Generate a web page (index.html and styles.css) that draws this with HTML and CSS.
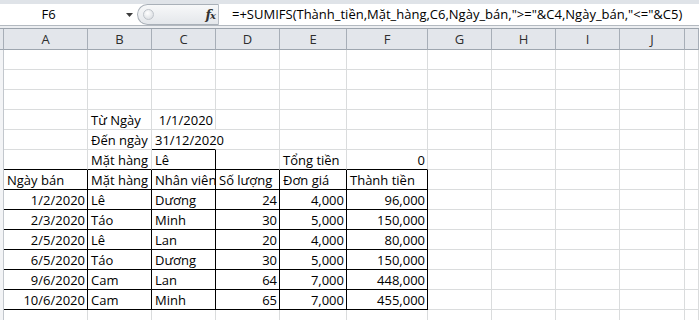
FILE: index.html
```html
<!DOCTYPE html>
<html lang="vi">
<head>
    <meta charset="UTF-8">
    <title>Bán hàng - SUMIFS</title>
    <link rel="stylesheet" href="styles.css">
</head>
<body>
    <div class="fbar">
        <div class="namebox">
            <span class="ref">F6</span>
            <svg class="caret" width="7" height="4" viewBox="0 0 7 4">
                <path d="M0 0h7L3.5 4z" fill="#3c3c3c"/>
            </svg>
        </div>
        <div class="pill">
            <span class="knob"></span>
            <span class="fx"><i>f</i><i class="x">x</i></span>
        </div>
        <div class="formula">=+SUMIFS(Thành_tiền,Mặt_hàng,C6,Ngày_bán,"&gt;="&amp;C4,Ngày_bán,"&lt;="&amp;C5)</div>
    </div>
    <div class="fbar-edge"></div>

    <div class="sheet" id="sheet"></div>

    <script>
        // Build the worksheet grid from the cell data below
        const cols = ['A', 'B', 'C', 'D', 'E', 'F', 'G', 'H', 'I', 'J', 'K'];
        const cells = {
            4: { B: 'Từ Ngày', C: ['1/1/2020', 'num'] },
            5: { B: 'Đến ngày', C: ['31/12/2020', 'spill'] },
            6: { B: 'Mặt hàng', C: 'Lê', E: 'Tổng tiền', F: ['0', 'num'] },
            7: { A: 'Ngày bán', B: 'Mặt hàng', C: ['Nhân viên', 'clip'], D: 'Số lượng', E: 'Đơn giá', F: 'Thành tiền' }
        };
        const sales = [
            ['1/2/2020', 'Lê', 'Dương', '24', '4,000', '96,000'],
            ['2/3/2020', 'Táo', 'Minh', '30', '5,000', '150,000'],
            ['2/5/2020', 'Lê', 'Lan', '20', '4,000', '80,000'],
            ['6/5/2020', 'Táo', 'Dương', '30', '5,000', '150,000'],
            ['9/6/2020', 'Cam', 'Lan', '64', '7,000', '448,000'],
            ['10/6/2020', 'Cam', 'Minh', '65', '7,000', '455,000']
        ];
        sales.forEach((r, i) => {
            cells[8 + i] = {
                A: [r[0], 'num'], B: r[1], C: r[2],
                D: [r[3], 'num'], E: [r[4], 'num'], F: [r[5], 'num']
            };
        });

        // Thin black borders: the table A7:F13 and the criteria cell C6
        const borders = { 'B6': 'bk-r', 'C5': 'bk-b', 'C6': 'bk-r bk-b' };
        ['A', 'B', 'D', 'E', 'F'].forEach(c => borders[c + '6'] = 'bk-b');
        for (let r = 7; r <= 13; r++) {
            ['A', 'B', 'C', 'D', 'E', 'F'].forEach(c => borders[c + r] = 'bk-r bk-b');
        }

        const sheet = document.getElementById('sheet');
        const add = (cls, text) => {
            const el = document.createElement('div');
            el.className = cls;
            if (text) el.textContent = text;
            sheet.appendChild(el);
        };

        add('corner');
        cols.forEach(c => add('col-head', c === 'K' ? '' : c));

        for (let r = 1; r <= 14; r++) {
            add('row-head');
            cols.forEach(c => {
                let val = (cells[r] || {})[c];
                let extra = '';
                if (Array.isArray(val)) { extra = ' ' + val[1]; val = val[0]; }
                const b = borders[c + r] ? ' ' + borders[c + r] : '';
                add('cell' + extra + b, val || '');
            });
        }
    </script>
</body>
</html>
```

FILE: styles.css
```css
* {
    margin: 0;
    padding: 0;
    box-sizing: border-box;
}

body {
    font-family: 'Open Sans', 'Noto Sans', sans-serif;
    font-size: 13px;
    color: #000;
    background: #fff;
    overflow: hidden;
}

/* Formula bar */
.fbar {
    display: flex;
    height: 25px;
    border-top: 4px solid #dfe3e8;
    background: #fff;
}

.namebox {
    width: 137px;
    display: flex;
    align-items: center;
}

.ref {
    width: 97px;
    text-align: center;
    line-height: 21px;
}

.caret {
    margin-left: 29px;
    margin-top: 1px;
}

.pill {
    width: 82px;
    display: flex;
    align-items: center;
    justify-content: space-between;
    padding: 0 3px 0 5px;
    border: 1px solid #a9b0b8;
    border-right-color: #b9bfc6;
    border-radius: 11px 0 0 11px;
    background: linear-gradient(#f7f8f9, #e4e7eb);
}

.knob {
    width: 11px;
    height: 11px;
    border-radius: 50%;
    border: 1px solid #bfc4ca;
    background: radial-gradient(circle at 40% 35%, #ffffff, #d3d7dc);
}

.fx {
    font-family: 'DejaVu Serif', serif;
    font-weight: bold;
    font-size: 13px;
    color: #333;
    letter-spacing: -1px;
}

.fx .x {
    font-size: 10px;
}

.formula {
    flex: 1;
    padding-left: 13px;
    line-height: 21px;
    white-space: nowrap;
    overflow: hidden;
}

.fbar-edge {
    height: 4px;
    border-top: 1px solid #b3b9c0;
    border-bottom: 1px solid #9ca4ad;
    background: #eceef1;
}

/* Worksheet grid */
.sheet {
    display: grid;
    grid-template-columns: 4px 84px 64px 64px 64px 67px 81px 64px 64px 64px 65px 1fr;
    grid-template-rows: 21px;
    grid-auto-rows: 20px;
}

.corner,
.col-head {
    background: #e3e6eb;
    border-right: 1px solid #a7aeb7;
    border-bottom: 1px solid #9ea6af;
}

.col-head {
    color: #2e2e2e;
    text-align: center;
    line-height: 20px;
}

.row-head {
    border-right: 1px solid #c2c7cd;
    background: #f3f4f6;
}

.cell {
    display: flex;
    align-items: flex-end;
    padding: 0 2px 0 3px;
    line-height: 17px;
    white-space: nowrap;
    border-right: 1px solid #dadcdd;
    border-bottom: 1px solid #dadcdd;
}

.cell.num {
    justify-content: flex-end;
}

.cell.spill {
    border-right-color: transparent;
}

.cell.clip {
    overflow: hidden;
}

.cell.bk-r {
    border-right-color: #000;
}

.cell.bk-b {
    border-bottom-color: #000;
}
```
